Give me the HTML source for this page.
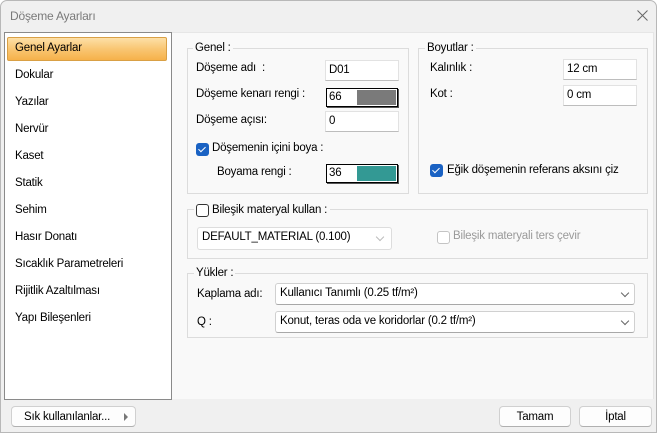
<!DOCTYPE html>
<html><head><meta charset="utf-8"><style>
*{box-sizing:border-box}
body{margin:0;width:658px;height:433px;overflow:hidden;background:#fff;font-family:"Liberation Sans",sans-serif;font-size:11.5px;color:#000;letter-spacing:-0.2px}
.win{position:absolute;left:0;top:0;width:657px;height:433px;background:#f0f0f0;border:1px solid #b8b8b8;border-radius:7px 7px 0 0;overflow:hidden}
.a{position:absolute;white-space:nowrap}
.list{position:absolute;left:3px;top:31px;width:168px;height:368px;background:#fff;border:1px solid #8a8a8a}
.sel{position:absolute;left:6px;top:36px;width:160px;height:24px;border:1px solid #d9a045;border-radius:2px;background:linear-gradient(#fde0a8,#f9c673 50%,#f6b14a)}
.panel{position:absolute;left:171px;top:31px;width:482px;height:367px;background:#f9f9f9;border-top:1px solid #e6e6e6;border-right:1px solid #e6e6e6}
.grp{position:absolute;border:1px solid #dcdcdc}
.lbl{position:absolute;background:#f9f9f9;padding:0 2px}
.inp{position:absolute;background:#fff;border:1px solid #e2e2e2;border-bottom:1px solid #bdbdbd;padding:3px 0 0 3px}
.col{position:absolute;background:#fff;border:1px solid #000;box-shadow:1px 1px 0 #555}
.cb{position:absolute;width:13px;height:13px;border-radius:3px}
.cb.on{background:#1a62c3}
.cb.on:after{content:"";position:absolute;left:3.5px;top:2px;width:3px;height:6px;border:solid #fff;border-width:0 1.5px 1.5px 0;transform:rotate(45deg)}
.cb.off{border:1px solid #333;background:#fff}
.combo{position:absolute;background:#fff;border:1px solid #d0d0d0;border-bottom:1px solid #a8a8a8;border-radius:3px;padding:3px 0 0 4px}
.chev{position:absolute;right:6px;top:6px;width:6px;height:6px;border:solid #666;border-width:0 1px 1px 0;transform:rotate(45deg)}
.btn{position:absolute;background:#fdfdfd;border:1px solid #d0d0d0;border-bottom-color:#b0b0b0;border-radius:4px;text-align:center;padding-top:4px}
</style></head><body><div class="win">
<div class="a" style="left:9px;top:8px;font-size:12px;color:#7a7a7a">Döşeme Ayarları</div>
<svg class="a" style="left:636px;top:9px" width="11" height="11"><path d="M0.5 0.5L10.5 10.5M10.5 0.5L0.5 10.5" stroke="#666" stroke-width="1"/></svg>
<div class="list"></div>
<div class="sel"></div>
<div class="a" style="left:14px;top:41px">Genel Ayarlar</div>
<div class="a" style="left:14px;top:68px">Dokular</div>
<div class="a" style="left:14px;top:95px">Yazılar</div>
<div class="a" style="left:14px;top:122px">Nervür</div>
<div class="a" style="left:14px;top:149px">Kaset</div>
<div class="a" style="left:14px;top:176px">Statik</div>
<div class="a" style="left:14px;top:203px">Sehim</div>
<div class="a" style="left:14px;top:230px">Hasır Donatı</div>
<div class="a" style="left:14px;top:257px">Sıcaklık Parametreleri</div>
<div class="a" style="left:14px;top:284px">Rijitlik Azaltılması</div>
<div class="a" style="left:14px;top:311px">Yapı Bileşenleri</div>
<div class="panel"></div>

<div class="grp" style="left:186px;top:47px;width:222px;height:146px"></div>
<div class="lbl" style="left:192px;top:41px">Genel :</div>
<div class="a" style="left:195px;top:61px">Döşeme adı &nbsp;:</div>
<div class="inp" style="left:324px;top:59px;width:74px;height:21px">D01</div>
<div class="a" style="left:195px;top:87px">Döşeme kenarı rengi :</div>
<div class="col" style="left:325px;top:87px;width:72px;height:19px"><div class="a" style="left:2px;top:2px">66</div><div class="a" style="left:30px;top:1px;width:39px;height:15px;background:#7a7a7a"></div></div>
<div class="a" style="left:195px;top:113px">Döşeme açısı:</div>
<div class="inp" style="left:324px;top:110px;width:74px;height:21px">0</div>
<div class="cb on" style="left:195px;top:142px"></div>
<div class="a" style="left:211px;top:141px">Döşemenin içini boya :</div>
<div class="a" style="left:216px;top:165px">Boyama rengi :</div>
<div class="col" style="left:325px;top:163px;width:72px;height:19px"><div class="a" style="left:2px;top:2px">36</div><div class="a" style="left:30px;top:1px;width:39px;height:15px;background:#339994"></div></div>

<div class="grp" style="left:417px;top:47px;width:230px;height:146px"></div>
<div class="lbl" style="left:424px;top:41px">Boyutlar :</div>
<div class="a" style="left:429px;top:61px">Kalınlık :</div>
<div class="inp" style="left:562px;top:58px;width:74px;height:21px">12 cm</div>
<div class="a" style="left:429px;top:87px">Kot :</div>
<div class="inp" style="left:562px;top:84px;width:74px;height:21px">0 cm</div>
<div class="cb on" style="left:429px;top:163px"></div>
<div class="a" style="left:446px;top:163px">Eğik döşemenin referans aksını çiz</div>

<div class="grp" style="left:186px;top:208px;width:461px;height:50px"></div>
<div class="lbl" style="left:193px;top:202px;width:136px;height:14px"></div>
<div class="cb off" style="left:195px;top:203px"></div>
<div class="a" style="left:211px;top:203px">Bileşik materyal kullan :</div>
<div class="combo" style="left:196px;top:226px;width:195px;height:23px;border-color:#ddd">DEFAULT_MATERIAL (0.100)<div class="chev" style="border-color:#bbb;right:8px"></div></div>
<div class="cb off" style="left:436px;top:230px;border-color:#c4c4c4"></div>
<div class="a" style="left:452px;top:229px;color:#9a9a9a">Bileşik materyali ters çevir</div>

<div class="grp" style="left:186px;top:272px;width:461px;height:65px"></div>
<div class="lbl" style="left:193px;top:266px">Yükler :</div>
<div class="a" style="left:196px;top:287px">Kaplama adı:</div>
<div class="combo" style="left:274px;top:282px;width:360px;height:22px">Kullanıcı Tanımlı (0.25 tf/m²)<div class="chev"></div></div>
<div class="a" style="left:196px;top:315px">Q :</div>
<div class="combo" style="left:274px;top:310px;width:360px;height:22px">Konut, teras oda ve koridorlar (0.2 tf/m²)<div class="chev"></div></div>

<div class="btn" style="left:10px;top:405px;width:125px;height:21px;text-align:left;padding-left:12px">Sık kullanılanlar...<svg class="a" style="left:112px;top:6px" width="5" height="8"><path d="M0 0L4 4L0 8Z" fill="#777"/></svg></div>
<div class="btn" style="left:498px;top:405px;width:72px;height:21px">Tamam</div>
<div class="btn" style="left:578px;top:405px;width:73px;height:21px">İptal</div>
</div></body></html>
